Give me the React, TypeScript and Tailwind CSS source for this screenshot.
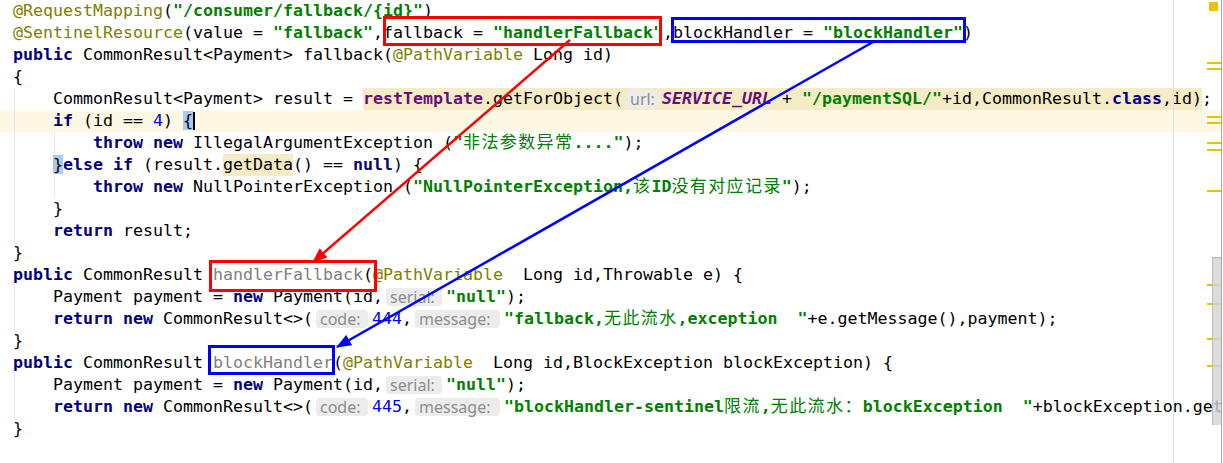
import type { ReactNode } from "react"

type P = { children: ReactNode }

const K = ({ children }: P) => <span className="font-bold text-[#000080]">{children}</span>
const S = ({ children }: P) => <span className="font-bold text-[#008000]">{children}</span>
const A = ({ children }: P) => <span className="text-[#808000]">{children}</span>
const N = ({ children }: P) => <span className="text-[#0000ff]">{children}</span>
const Gr = ({ children }: P) => <span className="text-[#808080]">{children}</span>
const F = ({ children }: P) => <span className="font-bold text-[#660e7a]">{children}</span>
const Cjk = ({ children }: P) => (
  <span className="font-['Noto_Sans_CJK_SC',sans-serif] text-[17px] font-normal leading-none tracking-[1.4px]">
    {children}
  </span>
)

function Hint({ label, w }: { label: string; w: string }) {
  return (
    <span
      className={`ml-[3px] mr-[4px] mt-[2px] inline-block h-[18px] rounded-[4px] bg-[#ececec] px-[4px] align-top font-['Noto_Sans',sans-serif] text-[16px] leading-[18px] text-[#8c8c8c] ${w}`}
    >
      {label}
    </span>
  )
}

function Line({ children, g1, g2, bg = "" }: { children?: ReactNode; g1?: boolean; g2?: boolean; bg?: string }) {
  return (
    <div className={`relative h-[22px] whitespace-pre pl-[13px] leading-[22px] ${bg}`}>
      {g1 && <span className="absolute left-[14px] top-0 h-full w-px bg-[#e6e6e6]" />}
      {g2 && <span className="absolute left-[54px] top-0 h-full w-px bg-[#e6e6e6]" />}
      {children}
    </div>
  )
}

// yellow marks on the error stripe
const marks = [62, 68, 116, 122, 142, 149, 190, 284, 303, 338, 365]

export default function App() {
  return (
    <div className="relative h-[463px] w-[1223px] overflow-hidden bg-white font-['DejaVu_Sans_Mono',monospace] text-[16.61px] text-black">
      <div className="flex flex-col">
        <Line>
          <A>@RequestMapping</A>(<S>{'"/consumer/fallback/{id}"'}</S>)
        </Line>
        <Line>
          <A>@SentinelResource</A>
          {"(value = "}
          <S>{'"fallback"'}</S>
          {",fallback = "}
          <S>{'"handlerFallback"'}</S>
          {",blockHandler = "}
          <S>{'"blockHandler"'}</S>)
        </Line>
        <Line>
          <K>public</K>
          {" CommonResult<Payment> fallback("}
          <A>@PathVariable</A>
          {" Long id)"}
        </Line>
        <Line>{"{"}</Line>
        <Line g1>
          {"    CommonResult<Payment> result = "}
          <span className="inline-block h-[22px] bg-[#f5ebc6] align-top">
            <F>restTemplate</F>
            {".getForObject("}
            <Hint label="url:" w="w-[32px]" />
            <span className="font-bold italic text-[#660e7a]">SERVICE_URL</span>
            {" + "}
            <S>{'"/paymentSQL/"'}</S>
            {"+id,CommonResult."}
            <K>class</K>
            {",id)"}
          </span>
          ;
        </Line>
        <Line g1 bg="bg-[#fdf8e3]">
          {"    "}
          <K>if</K>
          {" (id == "}
          <N>4</N>
          {") "}
          <span className="bg-[#a6cbef]">{"{"}</span>
          <span className="-mr-[2px] inline-block h-[18px] w-[2px] bg-black align-[-4px]" />
        </Line>
        <Line g1 g2>
          {"        "}
          <K>throw</K> <K>new</K>
          {" IllegalArgumentException ("}
          <S>
            {'"'}
            <Cjk>非法参数异常</Cjk>
            {'...."'}
          </S>
          {");"}
        </Line>
        <Line g1>
          {"    "}
          <span className="bg-[#a6cbef]">{"}"}</span>
          <K>else</K> <K>if</K>
          {" (result."}
          <span className="inline-block h-[22px] bg-[#f5ebc6] align-top">getData</span>
          {"() == "}
          <K>null</K>
          {") {"}
        </Line>
        <Line g1 g2>
          {"        "}
          <K>throw</K> <K>new</K>
          {" NullPointerException ("}
          <S>
            {'"NullPointerException,'}
            <Cjk>该</Cjk>
            ID
            <Cjk>没有对应记录</Cjk>
            {'"'}
          </S>
          {");"}
        </Line>
        <Line g1>{"    }"}</Line>
        <Line g1>
          {"    "}
          <K>return</K>
          {" result;"}
        </Line>
        <Line>{"}"}</Line>
        <Line>
          <K>public</K>
          {" CommonResult "}
          <Gr>handlerFallback</Gr>(<A>@PathVariable</A>
          {"  Long id,Throwable e) {"}
        </Line>
        <Line g1>
          {"    Payment payment = "}
          <K>new</K>
          {" Payment(id,"}
          <Hint label="serial:" w="w-[56px]" />
          <S>{'"null"'}</S>
          {");"}
        </Line>
        <Line g1>
          {"    "}
          <K>return</K> <K>new</K>
          {" CommonResult<>("}
          <Hint label="code:" w="w-[52px]" />
          <N>444</N>,
          <Hint label="message:" w="w-[85px]" />
          <S>
            {'"fallback,'}
            <Cjk>无此流水</Cjk>
            {',exception  "'}
          </S>
          {"+e.getMessage(),payment);"}
        </Line>
        <Line>{"}"}</Line>
        <Line>
          <K>public</K>
          {" CommonResult "}
          <Gr>blockHandler</Gr>(<A>@PathVariable</A>
          {"  Long id,BlockException blockException) {"}
        </Line>
        <Line g1>
          {"    Payment payment = "}
          <K>new</K>
          {" Payment(id,"}
          <Hint label="serial:" w="w-[56px]" />
          <S>{'"null"'}</S>
          {");"}
        </Line>
        <Line g1>
          {"    "}
          <K>return</K> <K>new</K>
          {" CommonResult<>("}
          <Hint label="code:" w="w-[52px]" />
          <N>445</N>,
          <Hint label="message:" w="w-[85px]" />
          <S>
            {'"blockHandler-sentinel'}
            <Cjk>限流</Cjk>,<Cjk>无此流水：</Cjk>
            {'blockException  "'}
          </S>
          {"+blockException.getMessage(),payment);"}
        </Line>
        <Line>{"}"}</Line>
      </div>

      {/* right margin guide and error stripe */}
      <span className="absolute left-[1173px] top-0 h-full w-px bg-[#e2e2e2]" />
      <span className="absolute left-[1221px] top-0 h-full w-px bg-[#a9a9a9]" />
      <span className="absolute left-[1209px] top-[2px] h-[9px] w-[9px] bg-[#e9c300]" />
      {marks.map((y) => (
        <span key={y} className="absolute left-[1207px] h-[2px] w-[14px] bg-[#e9c300]" style={{ top: y }} />
      ))}
      <span className="absolute left-[1212px] top-[257px] h-[168px] w-[9px] border-l border-t border-[#bcbcbc] bg-[#d2d2d2]/80" />

      {/* annotations */}
      <svg className="pointer-events-none absolute inset-0" width={1223} height={463}>
        <defs>
          <marker id="hr" markerWidth="15" markerHeight="12" refX="14" refY="6" orient="auto" markerUnits="userSpaceOnUse">
            <path d="M0,0 L15,6 L0,12 z" fill="#ff0000" />
          </marker>
          <marker id="hb" markerWidth="15" markerHeight="12" refX="14" refY="6" orient="auto" markerUnits="userSpaceOnUse">
            <path d="M0,0 L15,6 L0,12 z" fill="#0000ff" />
          </marker>
        </defs>
        <rect x={384.5} y={17.5} width={276} height={27} fill="none" stroke="#ff0000" strokeWidth={3} />
        <rect x={672.5} y={18.5} width={292} height={23} fill="none" stroke="#0000ff" strokeWidth={3} />
        <rect x={210.5} y={261.5} width={165} height={29} fill="none" stroke="#ff0000" strokeWidth={3} />
        <rect x={209.5} y={346.5} width={124} height={27} fill="none" stroke="#0000ff" strokeWidth={3} />
        <line x1={570} y1={40} x2={313} y2={262} stroke="#ff0000" strokeWidth={2.5} markerEnd="url(#hr)" />
        <line x1={873} y1={42} x2={337} y2={347} stroke="#0000ff" strokeWidth={2.5} markerEnd="url(#hb)" />
      </svg>
    </div>
  )
}
